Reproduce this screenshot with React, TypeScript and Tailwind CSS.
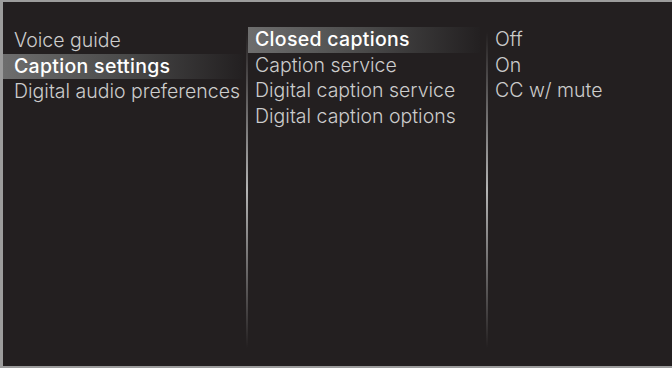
import React from 'react';

const col1 = ['Voice guide', 'Caption settings', 'Digital audio preferences'];
const col2 = ['Closed captions', 'Caption service', 'Digital caption service', 'Digital caption options'];
const col3 = ['Off', 'On', 'CC w/ mute'];

const Row: React.FC<{ label: string; active?: boolean; pad: string }> = ({ label, active, pad }) => (
  <div
    className={`h-[25.5px] flex items-center whitespace-nowrap ${pad} ${
      active
        ? 'bg-gradient-to-r from-[#6e6e6e] via-[#4a4a4a] to-[#232021] text-white font-medium tracking-[0.3px]'
        : 'text-[#cccccc] font-light'
    }`}
  >
    {label}
  </div>
);

const Divider: React.FC = () => (
  <div className="w-[2px] shrink-0 mt-[30px] mb-[18px] bg-gradient-to-b from-transparent via-[#b4b4b4] to-transparent" />
);

const App: React.FC = () => {
  return (
    <div
      className="w-[672px] h-[368px] bg-[#231f20] border-l-[3px] border-t-2 border-b-2 border-[#9c9c9c] flex text-[19.5px] leading-none"
      style={{ fontFamily: 'Inter, sans-serif' }}
    >
      <div className="w-[243px] shrink-0 pt-[26px] pr-[3px]">
        {col1.map((l, i) => (
          <Row key={l} label={l} active={i === 1} pad="pl-[11px]" />
        ))}
      </div>
      <Divider />
      <div className="w-[238px] shrink-0 pt-[25px] pr-[6px]">
        {col2.map((l, i) => (
          <Row key={l} label={l} active={i === 0} pad="pl-[7px]" />
        ))}
      </div>
      <Divider />
      <div className="flex-1 pt-[25px]">
        {col3.map((l) => (
          <Row key={l} label={l} pad="pl-[7px]" />
        ))}
      </div>
    </div>
  );
};

export default App;
